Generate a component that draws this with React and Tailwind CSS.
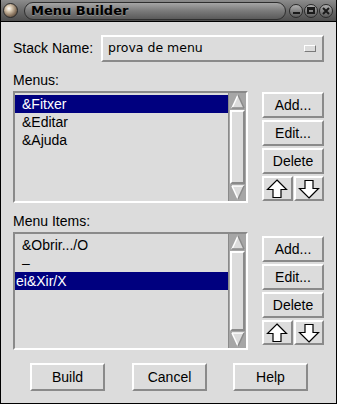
import React from "react";

const raised =
  "border-2 border-t-white border-l-white border-r-[#8a8a8a] border-b-[#8a8a8a] bg-[#dcdcdc]";
const sunken =
  "border-2 border-t-[#8a8a8a] border-l-[#8a8a8a] border-r-white border-b-white bg-[#dcdcdc]";

function UpTri() {
  return (
    <svg width="14" height="15" viewBox="0 0 14 15">
      <polygon points="7,1 13,14 1,14" fill="#dcdcdc" />
      <line x1="1" y1="14" x2="7" y2="1" stroke="#ffffff" strokeWidth="1.5" />
      <line x1="7" y1="1" x2="13" y2="14" stroke="#8a8a8a" strokeWidth="1.5" />
      <line x1="1" y1="14" x2="13" y2="14" stroke="#8a8a8a" strokeWidth="1.5" />
    </svg>
  );
}
function DownTri() {
  return (
    <svg width="14" height="15" viewBox="0 0 14 15">
      <polygon points="1,1 13,1 7,14" fill="#dcdcdc" />
      <line x1="1" y1="1" x2="13" y2="1" stroke="#ffffff" strokeWidth="1.5" />
      <line x1="1" y1="1" x2="7" y2="14" stroke="#ffffff" strokeWidth="1.5" />
      <line x1="13" y1="1" x2="7" y2="14" stroke="#8a8a8a" strokeWidth="1.5" />
    </svg>
  );
}

function Scrollbar() {
  return (
    <div className="w-[18px] h-full bg-[#a6a6a6] flex flex-col border-l border-[#8a8a8a]">
      <div className="h-[17px] flex items-center justify-center">
        <UpTri />
      </div>
      <div className={"flex-1 mx-[1px] " + raised}></div>
      <div className="h-[17px] flex items-center justify-center">
        <DownTri />
      </div>
    </div>
  );
}

function BigArrow({ down }) {
  return (
    <svg width="22" height="20" viewBox="0 0 22 20">
      <path
        d={
          down
            ? "M11 19 L20.5 9.5 L15 9.5 L15 1.5 L7 1.5 L7 9.5 L1.5 9.5 Z"
            : "M11 1 L20.5 10.5 L15 10.5 L15 18.5 L7 18.5 L7 10.5 L1.5 10.5 Z"
        }
        fill="#ffffff"
        stroke="#000000"
        strokeWidth="1.2"
        strokeLinejoin="miter"
      />
    </svg>
  );
}

function SideButtons({ top }) {
  return (
    <div className={"flex flex-col w-[62px] gap-[2px] " + top}>
      {["Add...", "Edit...", "Delete"].map((t) => (
        <div
          key={t}
          className={"h-[26px] flex items-center justify-center text-[14px] text-black " + raised}
        >
          {t}
        </div>
      ))}
      <div className="flex gap-[1px] h-[25px]">
        <div className={"flex-1 flex items-center justify-center " + raised}>
          <BigArrow />
        </div>
        <div className={"flex-1 flex items-center justify-center " + raised}>
          <BigArrow down />
        </div>
      </div>
    </div>
  );
}

function ListBox({ items, selected, h, pls }) {
  return (
    <div className={"w-[235px] flex " + h + " " + sunken}>
      <div className="flex-1 pt-[2px]">
        {items.map((t, i) => (
          <div
            key={i}
            className={
              "h-[18px] leading-[18px] text-[14px] " +
              (pls && pls[i] ? pls[i] : "pl-[7px] ") +
              (i === selected ? " bg-[#00007f] text-white" : " text-black")
            }
          >
            {t}
          </div>
        ))}
      </div>
      <Scrollbar />
    </div>
  );
}

export default function App() {
  return (
    <div
      className="w-[337px] h-[404px] bg-[#dcdcdc] border-x border-b border-black flex flex-col"
      style={{ fontFamily: '"Liberation Sans", Arial, sans-serif' }}
    >
      {/* Title bar */}
      <div className="h-[22px] flex items-center px-[2px] bg-linear-to-b from-[#8c8c8c] via-[#6a6a6a] to-[#4e4e4e] border-b border-black">
        <div className="w-[15px] h-[15px] rounded-full border border-[#2a2a2a] bg-[radial-gradient(circle_at_38%_35%,#ffffff_0%,#d8c8b0_25%,#8a7560_60%,#2e261c_100%)]"></div>
        <div className="ml-[6px] w-[262px] h-[18px] rounded-full border border-[#2e2e2e] bg-linear-to-b from-[#a6a6a6] via-[#7a7a7a] to-[#5a5a5a] flex items-center pl-[6px]">
          <span
            className="text-[13px] font-bold text-black leading-none [text-shadow:0_1px_0_rgba(255,255,255,0.25)]"
            style={{ fontFamily: '"DejaVu Sans", sans-serif' }}
          >
            Menu Builder
          </span>
        </div>
        <div className="ml-auto flex gap-[1px] pr-[1px]">
          {["min", "max", "close"].map((k) => (
            <div
              key={k}
              className="w-[14px] h-[14px] rounded-full border border-[#2a2a2a] bg-linear-to-b from-[#b0b0b0] to-[#5a5a5a] flex items-center justify-center"
            >
              {k === "min" && <div className="w-[7px] h-[2px] bg-[#1a1a1a] mt-[5px]"></div>}
              {k === "max" && <div className="w-[8px] h-[7px] border-2 border-[#1a1a1a] border-t-[3px]"></div>}
              {k === "close" && (
                <svg width="8" height="8" viewBox="0 0 8 8">
                  <path d="M1 1 L7 7 M7 1 L1 7" stroke="#1a1a1a" strokeWidth="2" />
                </svg>
              )}
            </div>
          ))}
        </div>
      </div>

      {/* Body */}
      <div className="flex flex-col px-[12px]">
        <div className="mt-[13px] flex items-center h-[27px]">
          <div className="w-[88px] text-[14px] text-black">Stack Name:</div>
          <div className={"flex-1 h-[27px] flex items-center pl-[5px] pr-[5px] " + raised}>
            <span
              className="text-[12.5px] text-black flex-1"
              style={{ fontFamily: '"DejaVu Sans", sans-serif' }}
            >
              prova de menu
            </span>
            <div className="w-[12px] h-[7px] border border-t-white border-l-white border-r-[#7a7a7a] border-b-[#7a7a7a] bg-[#dcdcdc] mr-[1px]"></div>
          </div>
        </div>

        <div className="mt-[10px] h-[17px] leading-[17px] text-[14px] text-black">Menus:</div>
        <div className="mt-[2px] flex gap-[14px]">
          <ListBox items={["&Fitxer", "&Editar", "&Ajuda"]} selected={0} h="h-[112px]" />
          <SideButtons top="mt-[1px]" />
        </div>

        <div className="mt-[10px] h-[17px] leading-[17px] text-[14px] text-black">Menu Items:</div>
        <div className="mt-[2px] flex gap-[14px]">
          <ListBox
            items={["&Obrir.../O", "–", "ei&Xir/X"]}
            selected={2}
            h="h-[118px]"
            pls={[null, null, "pl-[1px] "]}
          />
          <SideButtons top="mt-[4px]" />
        </div>

        <div className="mt-[13px] flex pl-[17px] gap-[27px]">
          {["Build", "Cancel", "Help"].map((t, i) => (
            <div
              key={t}
              className={
                "w-[75px] h-[28px] flex items-center justify-center text-[14px] text-black " +
                raised +
                (i === 2 ? " -ml-[1px]" : "")
              }
            >
              {t}
            </div>
          ))}
        </div>
      </div>
    </div>
  );
}
